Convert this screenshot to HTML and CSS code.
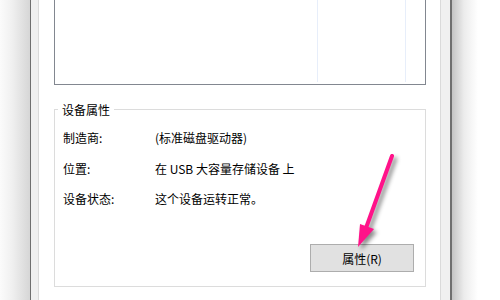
FILE: index.html
```html
<!DOCTYPE html>
<html lang="zh-CN">
<head>
<meta charset="utf-8">
<title>设备属性</title>
<link rel="stylesheet" href="styles.css">
</head>
<body>
<div class="screen">
  <div class="shadow-left"></div>
  <div class="dialog">
    <div class="page">
      <div class="listbox">
        <div class="col c1"></div>
        <div class="col c2"></div>
        <div class="col c3"></div>
      </div>
      <div class="group">
        <div class="legend">设备属性</div>
        <div class="rows">
          <div class="label">制造商:</div><div class="value">(标准磁盘驱动器)</div>
          <div class="label">位置:</div><div class="value">在 USB 大容量存储设备 上</div>
          <div class="label">设备状态:</div><div class="value">这个设备运转正常。</div>
        </div>
        <div class="actions"><button class="btn">属性(R)</button></div>
      </div>
    </div>
  </div>
  <div class="shadow-right"></div>
  <svg class="arrow" width="500" height="300" viewBox="0 0 500 300">
    <line x1="392" y1="156" x2="366" y2="228" stroke="#ff1289" stroke-width="4" stroke-linecap="round"/>
    <polygon points="360,224 374,229 358,247" fill="#ff1289"/>
  </svg>
</div>
</body>
</html>
```
FILE: styles.css
```css
html, body {
  margin: 0;
  padding: 0;
  background: #ffffff;
}
body {
  font-family: "Noto Sans CJK SC", "Noto Sans", sans-serif;
  font-size: 12px;
  color: #000;
}
.screen {
  position: relative;
  width: 500px;
  height: 300px;
  display: flex;
  overflow: hidden;
}
.shadow-left {
  width: 30px;
  flex: none;
  background: linear-gradient(to right, #fbfbfb, #f0f0f0 40%, #d6d6d6);
}
.dialog {
  flex: none;
  display: flex;
  background: #f0f0f0;
  border-left: 1px solid #6f6f6f;
  border-right: 2px solid #6f6f6f;
  padding: 0 9px 0 7px;
}
.page {
  width: 401px;
  background: #ffffff;
  border-left: 1px solid #dadada;
  border-right: 1px solid #dadada;
  padding: 0 14px 0 15px;
  box-sizing: border-box;
  width: 403px;
}
.listbox {
  width: 372px;
  height: 85px;
  box-sizing: border-box;
  border: 1px solid #828790;
  border-top: none;
  display: grid;
  grid-template-columns: 263px 88px 1fr;
  padding-bottom: 2px;
}
.col.c1, .col.c2 {
  border-right: 1px solid #e7eefa;
}
.group {
  margin-top: 24px;
  width: 372px;
  height: 178px;
  box-sizing: border-box;
  border: 1px solid #dcdcdc;
  display: flex;
  flex-direction: column;
  padding: 0 11px 14px 8px;
}
.legend {
  align-self: flex-start;
  margin: -8px 0 0 -5px;
  padding: 0 4px;
  background: #ffffff;
  line-height: 16px;
}
.rows {
  margin-top: 10px;
  display: grid;
  grid-template-columns: 92px 1fr;
  row-gap: 10.5px;
  line-height: 20px;
}
.actions {
  margin-top: auto;
  display: flex;
  justify-content: flex-end;
}
.btn {
  width: 104px;
  height: 28px;
  box-sizing: border-box;
  background: #e1e1e1;
  border: 1px solid #adadad;
  font-family: "Noto Sans CJK SC", "Noto Sans", sans-serif;
  font-size: 12px;
  color: #000;
  padding: 0;
}
.shadow-right {
  flex: 1;
  background: linear-gradient(to right, #c4c4c4, #ececec 12px, #ffffff 26px);
}
.arrow {
  position: absolute;
  left: 0;
  top: 0;
  filter: drop-shadow(3px 3px 2px rgba(0, 0, 0, 0.45));
}
```
